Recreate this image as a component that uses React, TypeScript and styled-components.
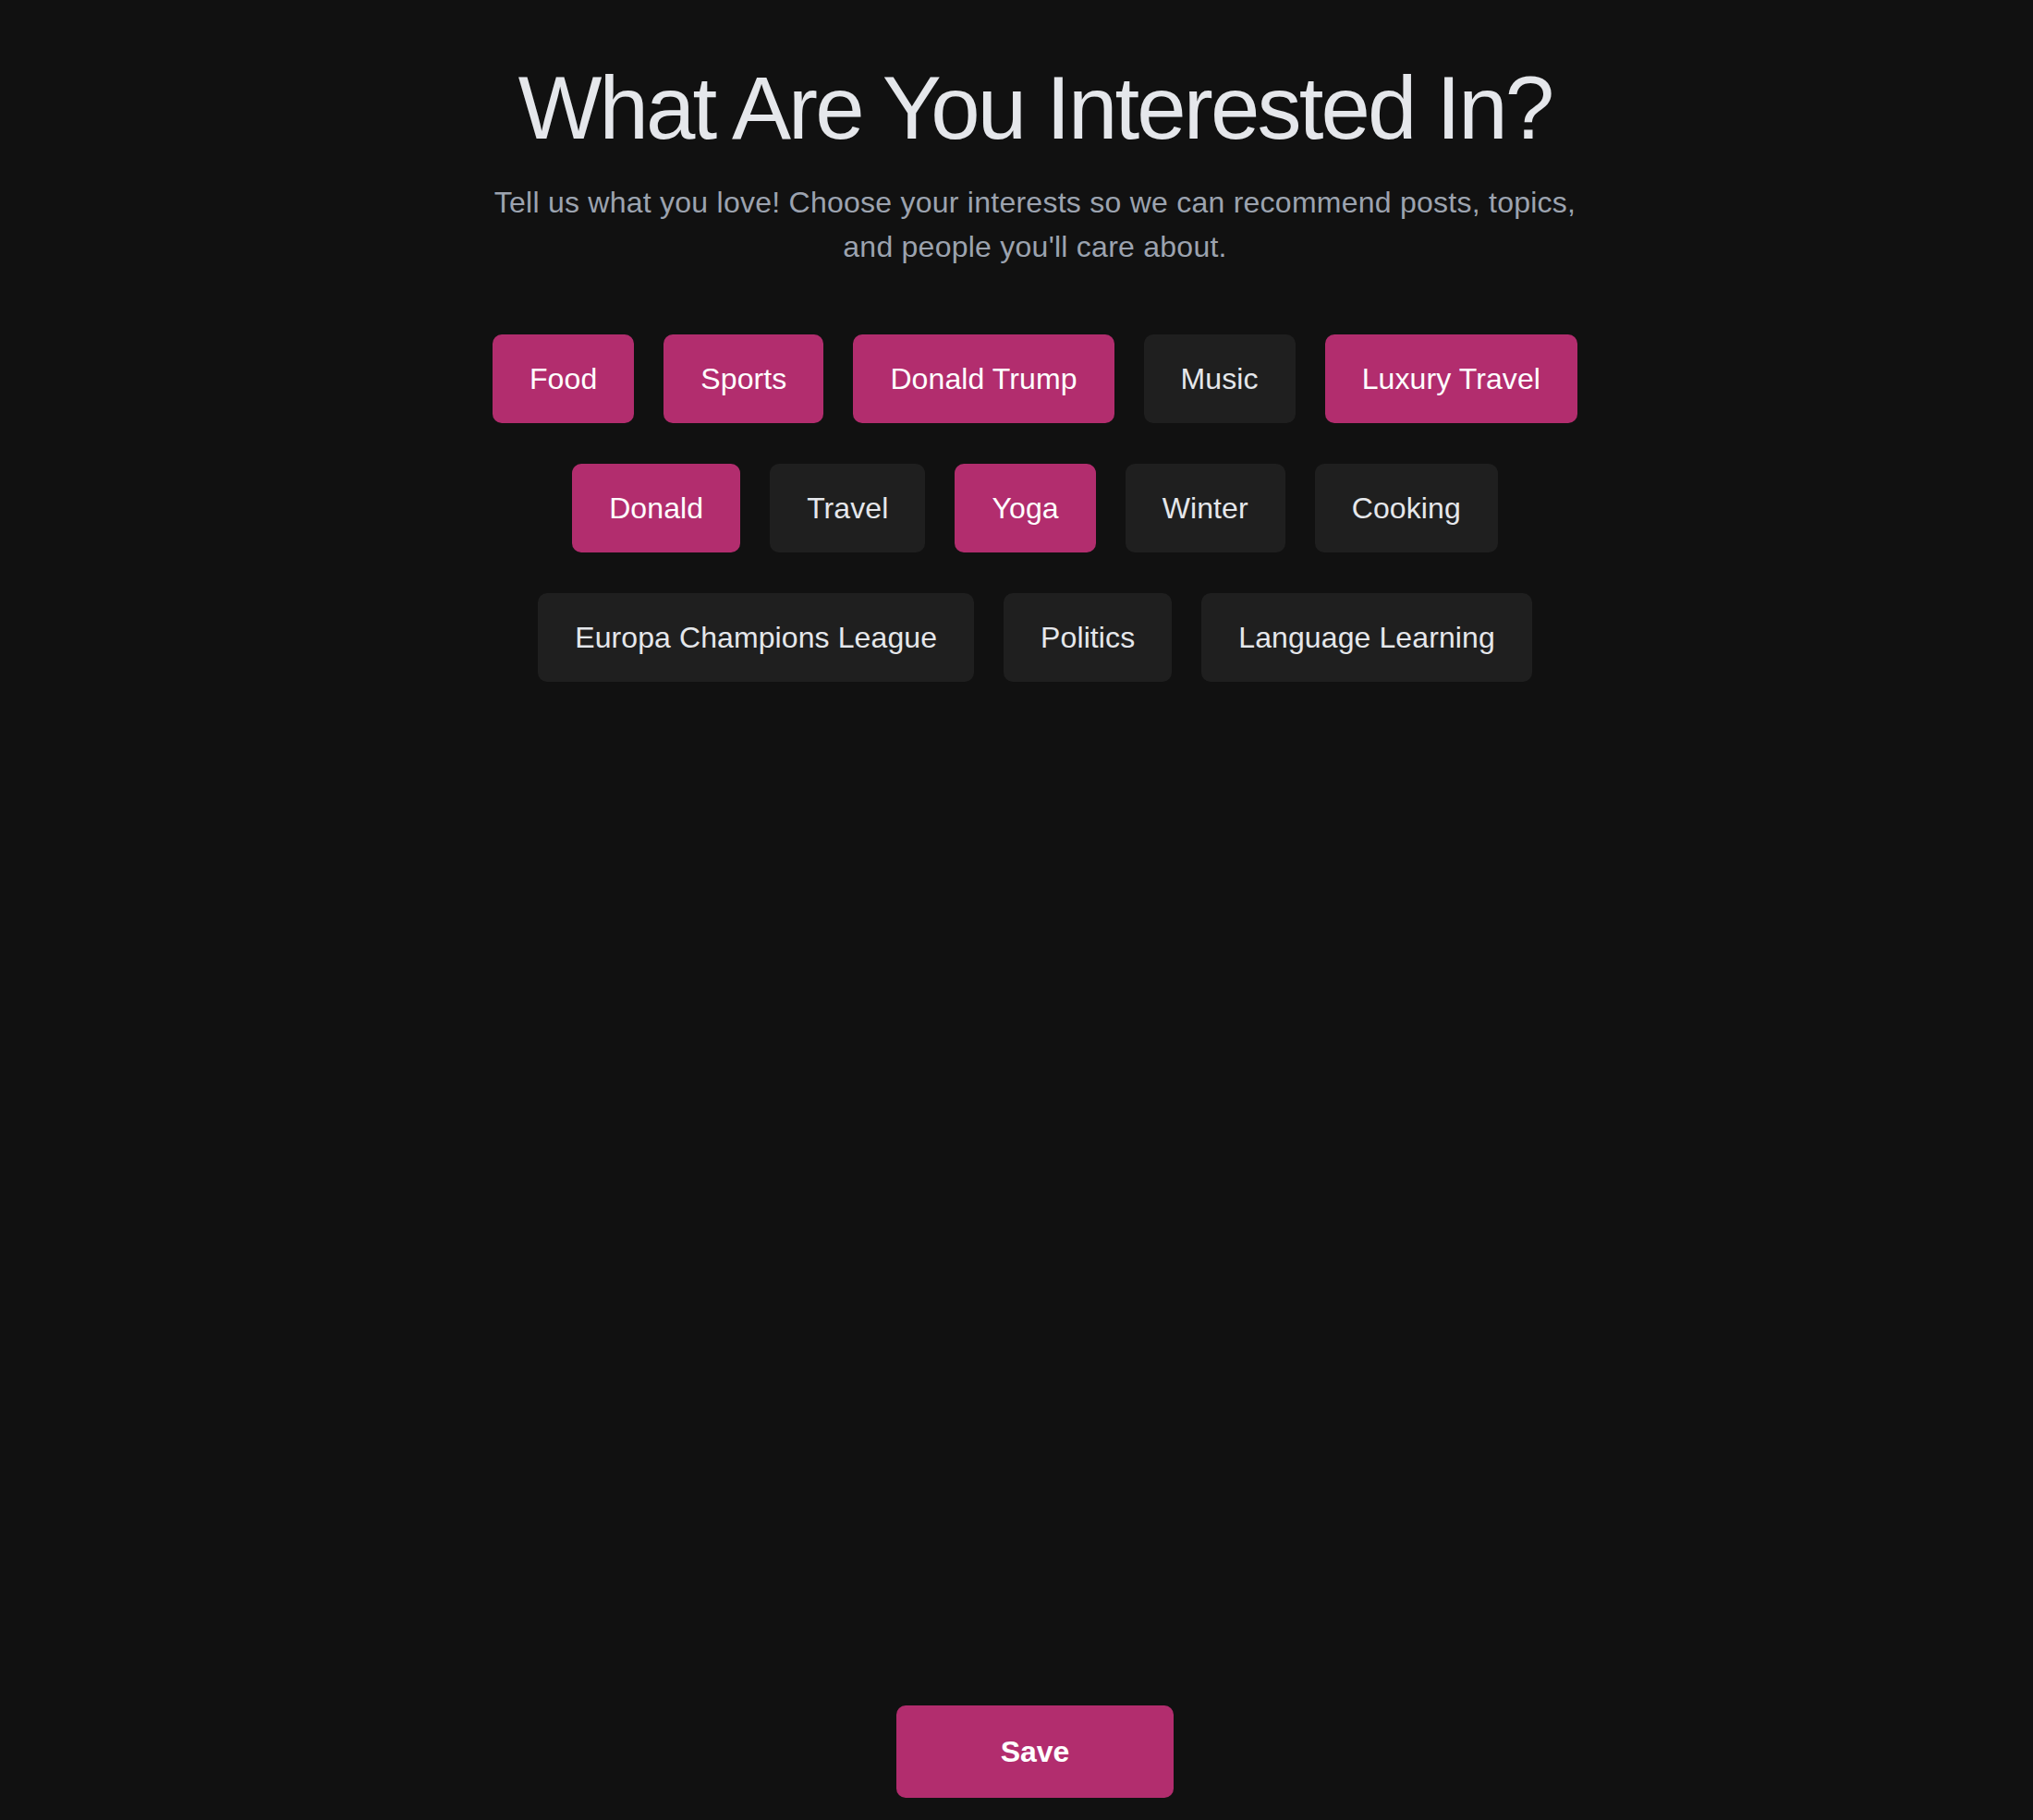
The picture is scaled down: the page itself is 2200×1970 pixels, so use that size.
import React, { useState } from "react";
import styled, { createGlobalStyle } from "styled-components";

const GlobalStyle = createGlobalStyle`
  * { box-sizing: border-box; }
  html, body {
    margin: 0;
    padding: 0;
    background: #111111;
    font-family: "Liberation Sans", Arial, sans-serif;
  }
`;

const Page = styled.div`
  min-height: 100vh;
  display: flex;
  flex-direction: column;
  align-items: center;
  padding: 69px 0 24px 40px;
  background: #111111;
`;

const Content = styled.div`
  width: 100%;
  max-width: 1200px;
  display: flex;
  flex-direction: column;
  align-items: center;
`;

const Title = styled.h1`
  margin: 0;
  font-size: 96px;
  line-height: 96px;
  font-weight: 400;
  letter-spacing: -2.85px;
  color: #e5e7eb;
  text-align: center;
`;

const Subtitle = styled.p`
  margin: 30px 0 0;
  font-size: 32px;
  line-height: 48px;
  letter-spacing: 0.25px;
  color: #9ca3af;
  text-align: center;
`;

const ChipGrid = styled.div`
  margin-top: 71px;
  display: flex;
  flex-wrap: wrap;
  justify-content: center;
  column-gap: 32px;
  row-gap: 44px;
`;

const Chip = styled.button<{ $selected: boolean }>`
  height: 96px;
  padding: 0 40px;
  border: none;
  border-radius: 10px;
  display: flex;
  align-items: center;
  font-family: "Liberation Sans", Arial, sans-serif;
  font-size: 32px;
  font-weight: 400;
  letter-spacing: 0.1px;
  cursor: pointer;
  background: ${(p) => (p.$selected ? "#b22d6e" : "#1f1f1f")};
  color: ${(p) => (p.$selected ? "#ffffff" : "#e5e7eb")};
`;

const Footer = styled.div`
  margin-top: auto;
  display: flex;
  justify-content: center;
`;

const SaveButton = styled.button`
  width: 300px;
  height: 100px;
  border: none;
  border-radius: 10px;
  background: #b22d6e;
  color: #ffffff;
  font-family: "Liberation Sans", Arial, sans-serif;
  font-size: 32px;
  font-weight: 700;
  cursor: pointer;
`;

const INTERESTS: { label: string; selected: boolean }[] = [
  { label: "Food", selected: true },
  { label: "Sports", selected: true },
  { label: "Donald Trump", selected: true },
  { label: "Music", selected: false },
  { label: "Luxury Travel", selected: true },
  { label: "Donald", selected: true },
  { label: "Travel", selected: false },
  { label: "Yoga", selected: true },
  { label: "Winter", selected: false },
  { label: "Cooking", selected: false },
  { label: "Europa Champions League", selected: false },
  { label: "Politics", selected: false },
  { label: "Language Learning", selected: false },
];

export default function App() {
  const [items, setItems] = useState(INTERESTS);
  const toggle = (i: number) =>
    setItems((prev) =>
      prev.map((it, j) => (j === i ? { ...it, selected: !it.selected } : it))
    );
  return (
    <>
      <GlobalStyle />
      <Page>
        <Content>
          <Title>What Are You Interested In?</Title>
          <Subtitle>
            Tell us what you love! Choose your interests so we can recommend
            posts, topics, and people you'll care about.
          </Subtitle>
          <ChipGrid>
            {items.map((it, i) => (
              <Chip key={it.label} $selected={it.selected} onClick={() => toggle(i)}>
                {it.label}
              </Chip>
            ))}
          </ChipGrid>
        </Content>
        <Footer>
          <SaveButton>Save</SaveButton>
        </Footer>
      </Page>
    </>
  );
}
